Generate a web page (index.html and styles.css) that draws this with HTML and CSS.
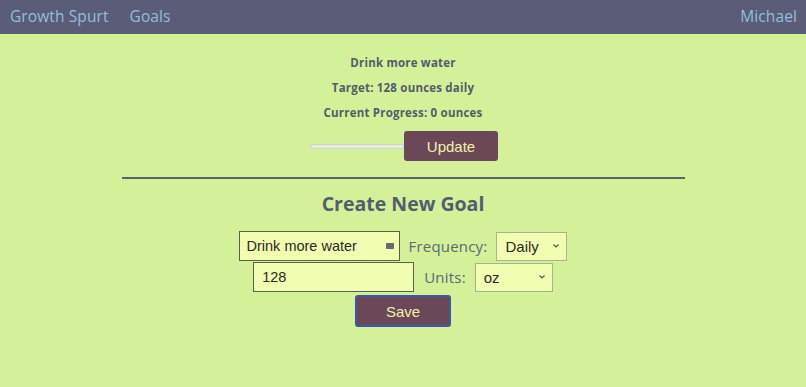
FILE: index.html
```html
<!DOCTYPE html>
<html>
<head>
<meta charset="utf-8">
<link rel="stylesheet" href="styles.css">
</head>
<body>
<nav class="nav">
  <div class="nav-left">
    <a class="nav-link">Growth Spurt</a>
    <a class="nav-link">Goals</a>
  </div>
  <a class="nav-link">Michael</a>
</nav>
<main class="main">
  <section class="goal">
    <p class="goal-line">Drink more water</p>
    <p class="goal-line">Target: 128 ounces daily</p>
    <p class="goal-line">Current Progress: 0 ounces</p>
    <div class="progress-row">
      <div class="progress"></div>
      <button class="btn btn-update">Update</button>
    </div>
  </section>
  <hr class="divider">
  <h2 class="title">Create New Goal</h2>
  <form class="form">
    <div class="row">
      <div class="field field-name">
        <span class="val">Drink more water</span>
        <span class="key-icon"></span>
      </div>
      <label class="label">Frequency:</label>
      <div class="select sel-freq"><span>Daily</span><svg width="8" height="6" viewBox="0 0 8 6"><path d="M1.5 1.5 L4 4 L6.5 1.5" fill="none" stroke="#555" stroke-width="1.2"/></svg></div>
    </div>
    <div class="row">
      <div class="field field-num"><span class="val">128</span></div>
      <label class="label">Units:</label>
      <div class="select sel-units"><span>oz</span><svg width="8" height="6" viewBox="0 0 8 6"><path d="M1.5 1.5 L4 4 L6.5 1.5" fill="none" stroke="#555" stroke-width="1.2"/></svg></div>
    </div>
    <div class="row">
      <button class="btn btn-save" type="button">Save</button>
    </div>
  </form>
</main>
</body>
</html>
```
FILE: styles.css
```css
* { box-sizing: border-box; }
html, body { margin: 0; padding: 0; }
body {
  background: #d4f099;
  font-family: "Open Sans", "DejaVu Sans", sans-serif;
  color: #565d6e;
  width: 806px;
  height: 387px;
  overflow: hidden;
}
.nav {
  height: 34px;
  background: #5b5c78;
  display: flex;
  justify-content: space-between;
  align-items: center;
  padding: 0 9px 2px 10px;
}
.nav-left { display: flex; gap: 21px; }
.nav-link {
  color: #92bfdc;
  font-size: 15.5px;
  font-weight: 500;
  letter-spacing: 0.1px;
}
.main { display: flex; flex-direction: column; align-items: center; }
.goal { display: flex; flex-direction: column; align-items: center; padding-top: 21px; }
.goal-line {
  margin: 0 0 10px 0;
  font-size: 11.5px;
  line-height: 15px;
  font-weight: 700;
  letter-spacing: 0.2px;
  color: #545c6c;
}
.progress-row { display: flex; align-items: center; margin-top: 1px; margin-left: 2px; }
.progress {
  width: 94px;
  height: 5px;
  border-radius: 3px;
  background: #e9ece4;
  box-shadow: inset 0 0 0 1px #cfd6c4;
}
.btn {
  font-family: "Liberation Sans", Arial, sans-serif;
  background: #6a4858;
  color: #f2f1a6;
  border: none;
  border-radius: 3px;
  font-size: 15px;
  padding: 0;
}
.btn-update { width: 94px; height: 30px; }
.divider {
  width: 563px;
  margin: 16px 0 0 0;
  border: none;
  border-top: 2px solid #5b6272;
}
.title {
  margin: 13px 0 15px 0;
  font-size: 19.5px;
  line-height: 24px;
  font-weight: 700;
  color: #555d70;
}
.form { display: flex; flex-direction: column; align-items: center; gap: 1px; }
.row { display: flex; align-items: center; gap: 9px; }
.field {
  width: 161px;
  height: 30px;
  background: #f1fdb0;
  border: 1.5px solid #59624a;
  display: flex;
  align-items: center;
  padding: 0 6px 0 7px;
  font-family: "Liberation Sans", Arial, sans-serif;
  font-size: 14.5px;
  color: #2a2a2a;
  justify-content: space-between;
}
.field-num { margin-right: 1px; padding-left: 8px; }
.key-icon {
  width: 8px;
  height: 6px;
  background: #6a6a6a;
  border-radius: 1px;
  margin-right: -1px;
}
.label {
  font-size: 15px;
  color: #606777;
  letter-spacing: 0.2px;
}
.select {
  height: 29px;
  background: #f1fdb0;
  border: 1px solid #a7b38a;
  display: flex;
  align-items: center;
  justify-content: space-between;
  padding: 0 6px 0 8px;
  font-family: "Liberation Sans", Arial, sans-serif;
  font-size: 15px;
  color: #2a2a2a;
}
.sel-freq { width: 71px; }
.sel-units { width: 78px; }
.btn-save {
  width: 96px;
  height: 32px;
  margin-top: 2px;
  border: 2px solid #3a5aa8;
  border-radius: 3px;
}
```
